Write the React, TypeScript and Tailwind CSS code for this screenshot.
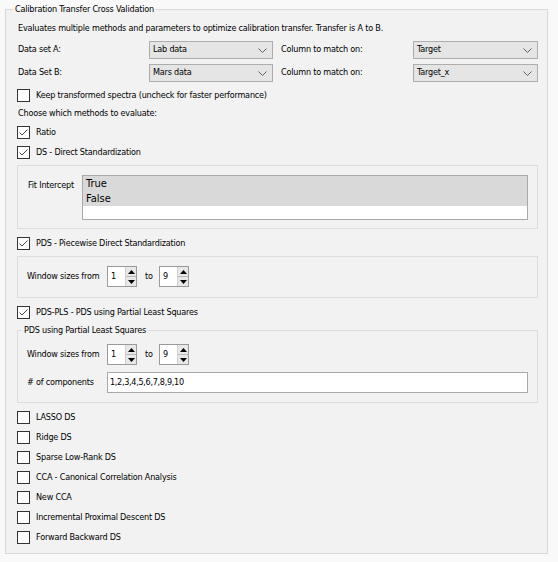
import React from "react";

function CheckBox({ checked, label }: { checked?: boolean; label: string }) {
  return (
    <div className="flex h-[13px] items-center">
      <div className="flex h-[13px] w-[13px] shrink-0 items-center justify-center border border-[#333333] bg-white">
        {checked && (
          <svg width="11" height="11" viewBox="0 0 11 11">
            <path d="M1.5 5.5 L4 8 L9.5 2.5" fill="none" stroke="#444" strokeWidth="1" />
          </svg>
        )}
      </div>
      <span className="ml-[6px] whitespace-nowrap leading-[13px]">{label}</span>
    </div>
  );
}

function Combo({ value, w }: { value: string; w: string }) {
  return (
    <div className={`flex h-[18px] ${w} shrink-0 items-center justify-between border border-[#adadad] bg-[#e5e5e5] pl-[3px] pr-[5px]`}>
      <span className="whitespace-nowrap">{value}</span>
      <svg width="9" height="5" viewBox="0 0 9 5">
        <path d="M0.5 0.5 L4.5 4.5 L8.5 0.5" fill="none" stroke="#606060" strokeWidth="1" />
      </svg>
    </div>
  );
}

function Spin({ value }: { value: string }) {
  return (
    <div className="flex h-[21px] w-[30px] shrink-0 border border-[#9a9a9a] bg-white">
      <span className="flex-1 pl-[3px] leading-[19px]">{value}</span>
      <div className="flex w-[11px] flex-col border-l border-[#d0d0d0]">
        <div className="flex flex-1 items-center justify-center border-b border-[#b8b8b8] bg-[#e8e8e8]">
          <svg width="7" height="4" viewBox="0 0 7 4">
            <path d="M0 4 L3.5 0 L7 4 Z" fill="#000" />
          </svg>
        </div>
        <div className="flex flex-1 items-center justify-center bg-[#e8e8e8]">
          <svg width="7" height="4" viewBox="0 0 7 4">
            <path d="M0 0 L3.5 4 L7 0 Z" fill="#000" />
          </svg>
        </div>
      </div>
    </div>
  );
}

function WindowRow() {
  return (
    <div className="flex h-[21px] items-center">
      <span className="w-[80px] shrink-0 whitespace-nowrap">Window sizes from</span>
      <Spin value="1" />
      <span className="ml-[8px] w-[14px]">to</span>
      <Spin value="9" />
    </div>
  );
}

export default function App() {
  const others = [
    "LASSO DS",
    "Ridge DS",
    "Sparse Low-Rank DS",
    "CCA - Canonical Correlation Analysis",
    "New CCA",
    "Incremental Proximal Descent DS",
    "Forward Backward DS",
  ];

  return (
    <div className="h-[562px] w-[558px] bg-[#f9f9f9] pl-[5px] pt-[3px] font-['DejaVu_Sans_Condensed','Liberation_Sans',sans-serif] text-[9px] tracking-[-0.2px] text-black">
      <fieldset className="w-[543px] border border-[#d9d9d9] bg-[#f2f2f2] pb-[9px] pl-[11px] pr-[8px]">
        <legend className="-ml-[4px] px-[2px] leading-[13px]">Calibration Transfer Cross Validation</legend>

        <div className="mt-[5px] h-[14px] pl-[1px] leading-[14px]">
          Evaluates multiple methods and parameters to optimize calibration transfer. Transfer is A to B.
        </div>

        <div className="mt-[6px] flex h-[18px] items-center">
          <span className="w-[132px] shrink-0 pl-[1px]">Data set A:</span>
          <Combo value="Lab data" w="w-[124px]" />
          <span className="ml-[8px] w-[132px] shrink-0">Column to match on:</span>
          <Combo value="Target" w="w-[125px]" />
        </div>

        <div className="mt-[5px] flex h-[18px] items-center">
          <span className="w-[132px] shrink-0 pl-[1px]">Data Set B:</span>
          <Combo value="Mars data" w="w-[124px]" />
          <span className="ml-[8px] w-[132px] shrink-0">Column to match on:</span>
          <Combo value="Target_x" w="w-[125px]" />
        </div>

        <div className="mt-[7px]">
          <CheckBox label="Keep transformed spectra (uncheck for faster performance)" />
        </div>

        <div className="mt-[4px] h-[14px] pl-[1px] leading-[14px]">Choose which methods to evaluate:</div>

        <div className="mt-[6px]">
          <CheckBox checked label="Ratio" />
        </div>
        <div className="mt-[7px]">
          <CheckBox checked label="DS - Direct Standardization" />
        </div>

        <div className="mt-[6px] flex h-[64px] w-[521px] items-start border border-[#dcdcdc] pl-[10px] pr-[9px] pt-[9px]">
          <span className="w-[54px] shrink-0 whitespace-nowrap pt-[3px] leading-[14px]">Fit Intercept</span>
          <div className="h-[45px] flex-1 border border-[#a9a9a9] bg-white text-[11px] leading-[15px] tracking-normal">
            <div className="bg-[#d9d9d9] pl-[3px]">True</div>
            <div className="bg-[#d9d9d9] pl-[3px]">False</div>
          </div>
        </div>

        <div className="mt-[8px]">
          <CheckBox checked label="PDS - Piecewise Direct Standardization" />
        </div>

        <div className="mt-[6px] h-[42px] w-[521px] border border-[#dcdcdc] pl-[9px] pt-[9px]">
          <WindowRow />
        </div>

        <div className="mt-[8px]">
          <CheckBox checked label="PDS-PLS - PDS using Partial Least Squares" />
        </div>

        <fieldset className="mt-[5px] w-[521px] border border-[#dcdcdc] pb-[9px] pl-[9px] pr-[9px]">
          <legend className="-ml-[5px] px-[2px] leading-[13px]">PDS using Partial Least Squares</legend>
          <div className="mt-[7px]">
            <WindowRow />
          </div>
          <div className="mt-[7px] flex h-[21px] items-center">
            <span className="w-[80px] shrink-0 whitespace-nowrap">&#35; of components</span>
            <div className="h-[21px] flex-1 border border-[#a9a9a9] bg-white pl-[2px] leading-[19px] tracking-[-0.3px]">
              1,2,3,4,5,6,7,8,9,10
            </div>
          </div>
        </fieldset>

        <div className="mt-[8px] flex flex-col gap-[7px]">
          {others.map((o) => (
            <CheckBox key={o} label={o} />
          ))}
        </div>
      </fieldset>
    </div>
  );
}
